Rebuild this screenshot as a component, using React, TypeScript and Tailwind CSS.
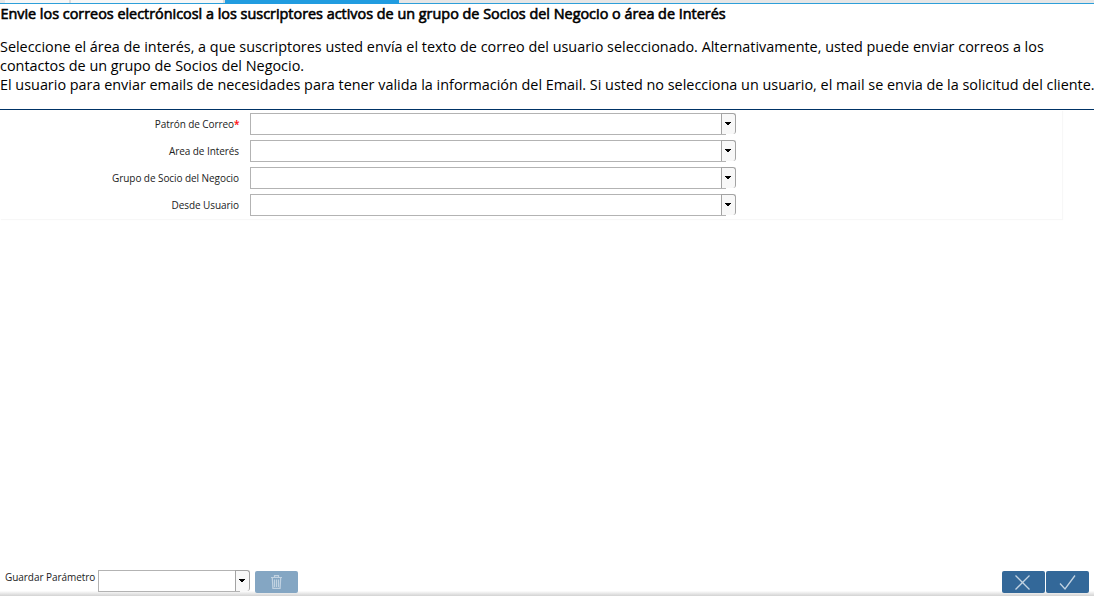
import type { ReactNode } from "react";

function Combo({ width }: { width: string }) {
  return (
    <div className={`relative flex h-[22px] ${width}`}>
      <input className="h-[22px] min-w-0 flex-1 border border-r-0 border-[#b3b3b3] bg-white outline-none" />
      <button className="flex h-[21px] w-[15px] items-center justify-center rounded-r-[3px] border border-b-0 border-[#a3a3a3] bg-[#f8f8f8] pr-px">
        <svg width="6" height="4" viewBox="0 0 6 4" shapeRendering="crispEdges">
          <path d="M0 0h6v1H5v1H4v1H2V2H1V1H0z" fill="#000" />
        </svg>
      </button>
      <span className="absolute right-[10px] bottom-0 h-px w-[5px] bg-[#b3b3b3]" />
    </div>
  );
}

function Row({ label, required }: { label: string; required?: boolean }) {
  return (
    <div className="flex h-[27px] items-start">
      <label className="w-[239px] pt-[4px] text-right text-[10px] leading-[14px] tracking-[-0.07px] text-[#222]">
        {label}
        {required && <span className="tracking-[-0.6px] text-[#ff0000] [-webkit-text-stroke:0.2px_red]">*</span>}
      </label>
      <div className="ml-[11px]">
        <Combo width="w-[486px]" />
      </div>
    </div>
  );
}

function ActionButton({ children, muted }: { children: ReactNode; muted?: boolean }) {
  return (
    <button
      className={`flex h-[22px] w-[43px] items-center justify-center rounded-[2px] ${
        muted ? "bg-[#84a6c3]" : "bg-[#336899]"
      }`}
    >
      {children}
    </button>
  );
}

export default function App() {
  return (
    <div className="flex h-[596px] w-[1094px] flex-col overflow-hidden bg-white font-['Open_Sans','Noto_Sans',sans-serif] text-black">
      <div className="flex h-[4px] shrink-0 border-b border-[#2d9fd9] bg-[#e6e6e6]">
        <div className="w-[5px]" />
        <div className="w-[64px] bg-[#f7f7f7]" />
        <div className="w-[2px] bg-[#dcdcdc]" />
        <div className="w-[152px] bg-[#f7f7f7]" />
        <div className="w-[2px] bg-[#dcdcdc]" />
        <div className="h-[4px] w-[174px] bg-[#219ce0]" />
      </div>

      <header className="h-[106px] shrink-0 border-b border-[#003366] text-[14.4px] leading-[19px] whitespace-nowrap">
        <h1 className="pl-[0.4px] font-normal [-webkit-text-stroke:0.6px_black]">
          Envie los correos electrónicosl a los suscriptores activos de un grupo de Socios del Negocio o área de Interés
        </h1>
        <p className="mt-[14px]">
          Seleccione el área de interés, a que suscriptores usted envía el texto de correo del usuario seleccionado. Alternativamente, usted puede enviar correos a los
          <br />
          contactos de un grupo de Socios del Negocio.
          <br />
          El usuario para enviar emails de necesidades para tener valida la información del Email. Si usted no selecciona un usuario, el mail se envia de la solicitud del cliente.
        </p>
      </header>

      <main className="h-[109px] w-[1062px] shrink-0 pt-[3px] shadow-[1px_1px_1px_#f7f7f7]">
        <Row label="Patrón de Correo" required />
        <Row label="Area de Interés" />
        <Row label="Grupo de Socio del Negocio" />
        <Row label="Desde Usuario" />
      </main>

      <footer className="mt-auto flex h-[26px] shrink-0 items-start bg-linear-to-b from-white from-80% to-[#d3d3d3]">
        <label className="w-[98px] pl-[5px] text-[10px] leading-[14px] tracking-[-0.05px] whitespace-nowrap text-[#222]">Guardar Parámetro</label>
        <Combo width="w-[152px]" />
        <div className="mt-[1px] ml-[5px]">
          <ActionButton muted>
            <svg width="11" height="14" viewBox="0 0 11 14" fill="none" stroke="#c1d2e1" strokeWidth="1.2">
              <path d="M0 2.500h11M3.500 2.500V.6h4v1.900M1.300 3l.6 10.400h7.200L9.700 3M3.500 4.500v7.500M5.500 4.500v7.500M7.500 4.500v7.500" />
            </svg>
          </ActionButton>
        </div>
        <div className="mt-[1px] mr-[5px] ml-auto flex gap-px">
          <ActionButton>
            <svg width="17" height="15" viewBox="0 0 17 15" fill="none" stroke="#c2d3e2" strokeWidth="1.3">
              <path d="M.5.5l14 14M14.500.5l-14 14" />
            </svg>
          </ActionButton>
          <ActionButton>
            <svg width="17" height="15" viewBox="0 0 17 15" fill="none" stroke="#c2d3e2" strokeWidth="1.3">
              <path d="M1 8.500l5 5.500L16 .5" />
            </svg>
          </ActionButton>
        </div>
      </footer>
    </div>
  );
}
